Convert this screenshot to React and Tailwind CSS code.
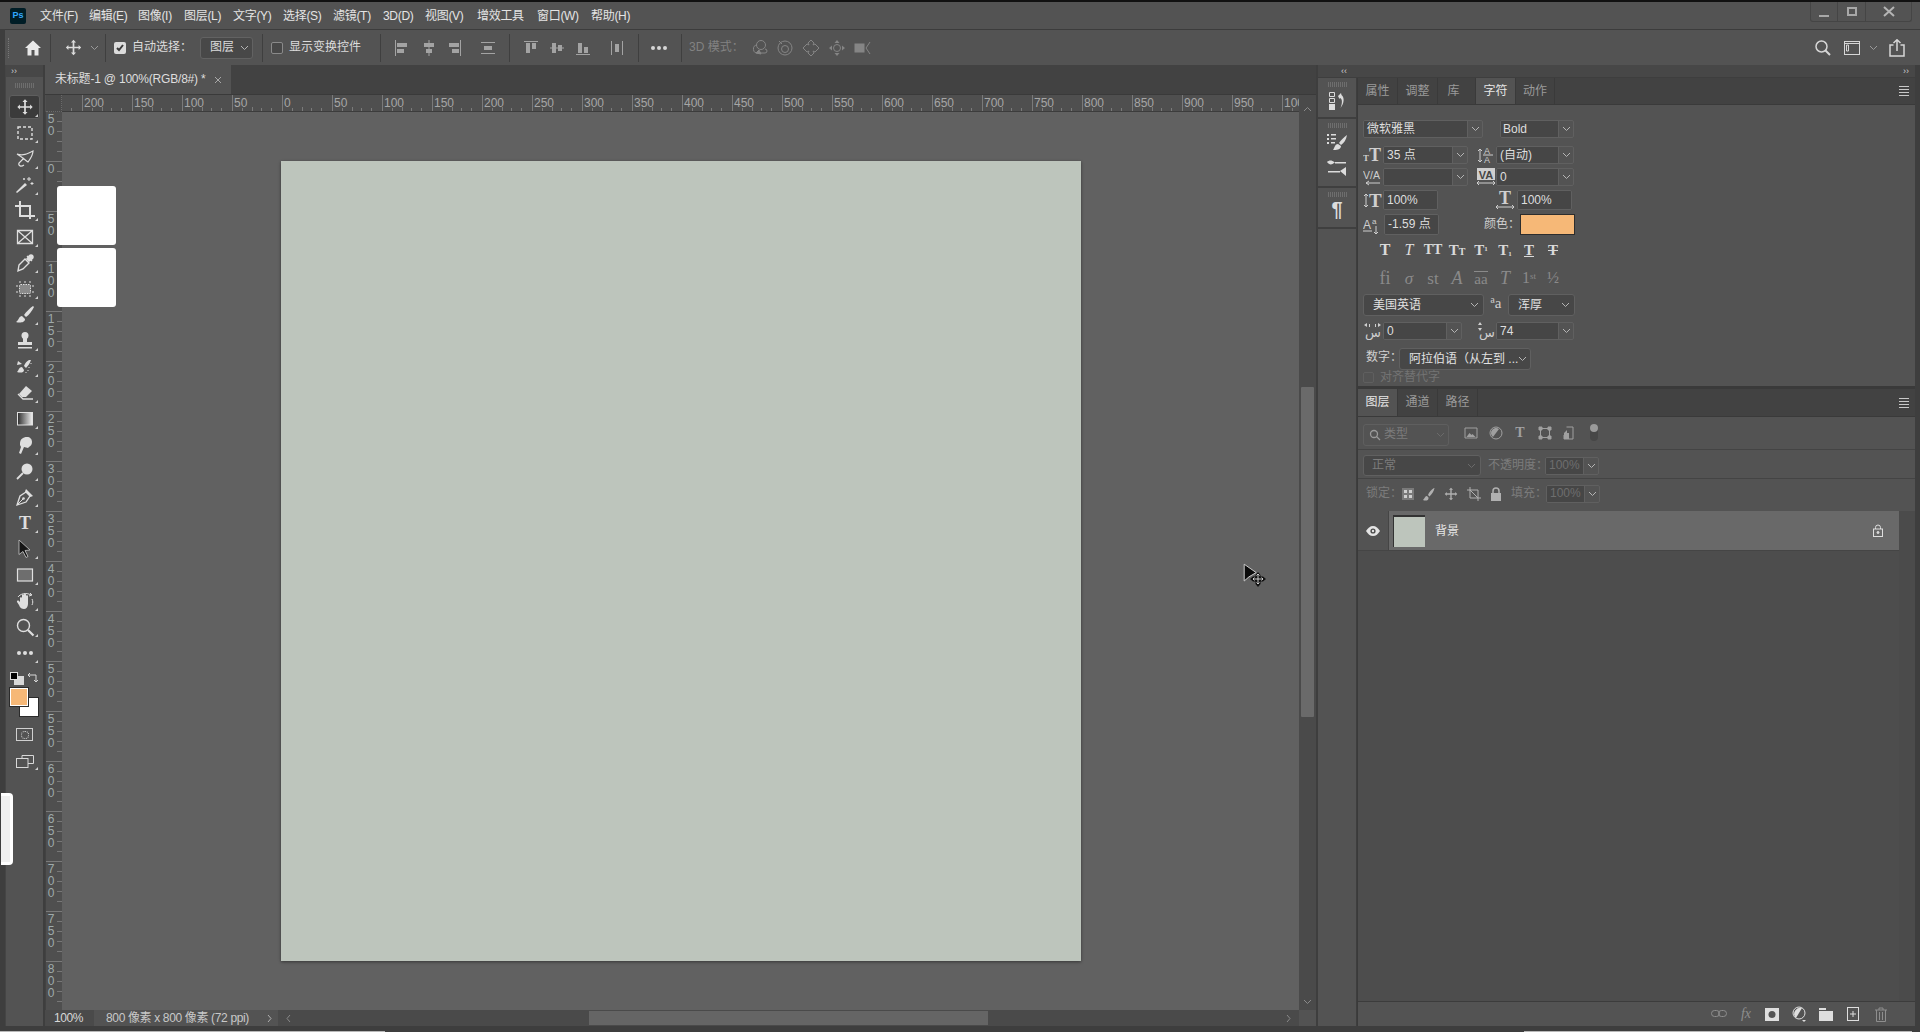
import React from "react";

const Svg = ({ s = 20, w, h, vb = "0 0 20 20", c = "", children }) => (
  <svg width={w || s} height={h || s} viewBox={vb} className={"shrink-0 " + c} fill="currentColor">{children}</svg>
);
const Chev = ({ c = "text-[#b5b5b5]" }) => (
  <svg width="9" height="6" viewBox="0 0 9 6" className={"shrink-0 " + c} fill="none" stroke="currentColor" strokeWidth="1"><path d="M1 1l3.500 3.500L8 1" /></svg>
);
const MOVE = "M10 1l3 3h-2v5h5V7l3 3-3 3v-2h-5v5h2l-3 3-3-3h2v-5H4v2l-3-3 3-3v2h5V4H7z";
const Grip = () => (
  <div className="flex justify-center gap-[1px] h-[5px]">
    {[0, 1, 2, 3, 4, 5, 6, 7, 8, 9].map((i) => <span key={i} className="w-[1px] h-[5px] bg-[#6e6e6e]" />)}
  </div>
);
const Sep = () => <div className="w-[1px] h-[28px] bg-[#3f3f3f] shrink-0" />;
const Menu = () => (
  <div className="flex flex-col gap-[2px] w-[10px]">
    {[0, 1, 2, 3].map((i) => <span key={i} className="h-[1px] bg-[#c8c8c8]" />)}
  </div>
);

const menus = [
  ["文件(F)", "w-[49px]"], ["编辑(E)", "w-[49px]"], ["图像(I)", "w-[46px]"], ["图层(L)", "w-[49px]"],
  ["文字(Y)", "w-[50px]"], ["选择(S)", "w-[50px]"], ["滤镜(T)", "w-[50px]"], ["3D(D)", "w-[42px]"],
  ["视图(V)", "w-[52px]"], ["增效工具", "w-[60px]"], ["窗口(W)", "w-[54px]"], ["帮助(H)", "w-[50px]"],
];

function TitleBar() {
  return (
    <div className="h-[27px] bg-[#535353] flex items-center relative shrink-0">
      <div className="ml-[10px] w-[16px] h-[16px] rounded-[2px] bg-[#001d26] flex items-center justify-center text-[9px] font-bold text-[#31a8ff] leading-none">Ps</div>
      <div className="flex ml-[14px] text-[12px] text-[#e4e4e4] mt-[1px] tracking-[-0.3px]">
        {menus.map(([t, w]) => <div key={t} className={w + " whitespace-nowrap"}>{t}</div>)}
      </div>
      <div className="absolute right-[8px] top-0 w-[102px] h-[20px] border border-t-0 border-[#454545] rounded-b-[3px] flex text-[#b4b4b4]">
        <div className="w-[27px] border-r border-[#454545] flex items-end justify-center pb-[4px]"><span className="w-[10px] h-[2px] bg-[#a8a8a8]" /></div>
        <div className="w-[28px] border-r border-[#454545] flex items-center justify-center"><span className="w-[10px] h-[9px] border-2 border-[#a8a8a8]" /></div>
        <div className="flex-1 flex items-center justify-center">
          <svg width="12" height="11" viewBox="0 0 12 11" stroke="currentColor" strokeWidth="2"><path d="M1 1l10 9M11 1L1 10" /></svg>
        </div>
      </div>
    </div>
  );
}

const Align = ({ children, ml = "" }) => (
  <Svg s={18} vb="0 0 18 18" c={ml + " text-[#a3a3a3]"}>{children}</Svg>
);

function OptionsBar() {
  return (
    <div className="h-[36px] ml-[5px] bg-[#535353] border-t border-[#3c3c3c] flex items-center text-[12px] text-[#dcdcdc] shrink-0 relative">
      <div className="w-[5px] h-[20px] ml-[3px] border-l border-dotted border-[#777]" />
      <Svg s={18} vb="0 0 18 18" c="ml-[11px] text-[#e8e8e8]"><path d="M9 1.500L1 9h2.500v7.500h4V11h3v5.500h4V9H17z" /></Svg>
      <div className="ml-[8px]"><Sep /></div>
      <Svg s={17} c="ml-[14px] text-[#dcdcdc]"><path d={MOVE} /></Svg>
      <Chev c="ml-[8px] text-[#9a9a9a]" />
      <div className="ml-[6px]"><Sep /></div>
      <div className="ml-[8px] w-[12px] h-[12px] rounded-[2px] bg-[#dcdcdc] flex items-center justify-center">
        <svg width="10" height="10" viewBox="0 0 10 10" fill="none" stroke="#3a3a3a" strokeWidth="2"><path d="M2 5l2 2 4-5" /></svg>
      </div>
      <span className="ml-[6px] whitespace-nowrap w-[68px]">自动选择：</span>
      <div className="w-[53px] h-[22px] border border-[#626262] bg-[#484848] rounded-[3px] flex items-center pl-[9px] justify-between pr-[3px]">
        <span>图层</span><Chev />
      </div>
      <div className="ml-[9px]"><Sep /></div>
      <div className="ml-[8px] w-[12px] h-[12px] rounded-[2px] border border-[#8a8a8a] bg-[#484848]" />
      <span className="ml-[6px] whitespace-nowrap w-[91px]">显示变换控件</span>
      <Sep />
      <Align ml="ml-[13px]"><path d="M1 1h1v16H1zM3 4h10v4H3zM3 10h7v4H3z" /></Align>
      <Align ml="ml-[8px]"><path d="M8.500 1h1v16h-1zM4 4h10v4H4zM6 10h6v4H6z" /></Align>
      <Align ml="ml-[6px]"><path d="M16 1h1v16h-1zM5 4h10v4H5zM8 10h7v4H8z" /></Align>
      <Align ml="ml-[17px]"><path d="M2 3h14v1H2zM2 14h14v1H2zM5 7h8v4H5z" /></Align>
      <div className="ml-[12px]"><Sep /></div>
      <Align ml="ml-[12px]"><path d="M2 2h14v1H2zM4 4h4v10H4zM10 4h4v6h-4z" /></Align>
      <Align ml="ml-[8px]"><path d="M2 8.500h14v1H2zM4 4h4v10H4zM10 6h4v6h-4z" /></Align>
      <Align ml="ml-[8px]"><path d="M2 15h14v1H2zM4 4h4v10H4zM10 8h4v6h-4z" /></Align>
      <Align ml="ml-[16px]"><path d="M3 2h1v14H3zM14 2h1v14h-1zM7 5h4v8H7z" /></Align>
      <div className="ml-[12px]"><Sep /></div>
      <div className="ml-[12px] flex gap-[2px]">{[0, 1, 2].map((i) => <span key={i} className="w-[4px] h-[4px] rounded-full bg-[#d6d6d6]" />)}</div>
      <div className="ml-[14px]"><Sep /></div>
      <span className="ml-[7px] text-[#828282] whitespace-nowrap w-[61px]">3D 模式：</span>
      <div className="flex text-[#858585] gap-[8px] items-center">
        <svg width="18" height="18" viewBox="0 0 18 18" fill="none" stroke="currentColor"><circle cx="11" cy="6" r="4.500" /><path d="M7 6a4 4 0 1 0 1 8h7a2 2 0 0 0 0-4" /><path d="M6 14l3-3 2 4z" fill="currentColor" /></svg>
        <svg width="18" height="18" viewBox="0 0 18 18" fill="none" stroke="currentColor"><circle cx="9" cy="9" r="7" /><circle cx="9" cy="10" r="3.500" /><path d="M3 2l3 3" /></svg>
        <svg width="18" height="18" viewBox="0 0 18 18" fill="none" stroke="currentColor"><path d="M9 1l3 3-1 2 2-1 4 4-4 4-2-1 1 2-3 3-3-3 1-2-2 1-4-4 4-4 2 1-1-2z" /></svg>
        <svg width="18" height="18" viewBox="0 0 18 18"><path d="M9 1l2.500 3h-5zM9 17l-2.500-3h5zM1 9l3-2.500v5zM17 9l-3 2.500v-5z" fill="currentColor" /><circle cx="9" cy="9" r="3.500" fill="none" stroke="currentColor" /></svg>
        <svg width="18" height="18" viewBox="0 0 18 18" fill="none" stroke="currentColor"><rect x="1" y="5" width="9" height="8" fill="currentColor" /><path d="M16 3l-4 6 4 6" /></svg>
      </div>
      <div className="ml-auto mr-[15px] flex items-center text-[#d6d6d6]">
        <svg width="18" height="18" viewBox="0 0 18 18" fill="none" stroke="currentColor" strokeWidth="1.500"><circle cx="7.500" cy="7.500" r="5.500" /><path d="M11.500 11.500L16 16" strokeWidth="2" /></svg>
        <svg width="16" height="14" viewBox="0 0 16 14" className="ml-[12px]" fill="none" stroke="currentColor"><rect x="0.500" y="0.500" width="15" height="13" /><path d="M0 2.500h16" /><path d="M2.500 4h2v6h-2z" /></svg>
        <Chev c="ml-[9px] text-[#9a9a9a]" />
        <svg width="16" height="18" viewBox="0 0 16 18" className="ml-[11px]" fill="none" stroke="currentColor" strokeWidth="1.500"><path d="M4.500 6H1v11h14V6h-3.500M8 12V1M4.500 4L8 .8 11.500 4" /></svg>
      </div>
    </div>
  );
}

const tools = [
  <path d={MOVE} transform="translate(1.500 1.500) scale(.85)" />,
  <rect x="3" y="4" width="14" height="12" fill="none" stroke="currentColor" strokeWidth="1.400" strokeDasharray="3 2" />,
  <path d="M2 5C8 7 12 5 18 2C18 6 16 9 13 13C10 11 7 8 2 5ZM9 9L4 14C3 17 6 18 9 16" fill="none" stroke="currentColor" strokeWidth="1.200" />,
  <g><path d="M2 18l-1-1 9-9 2 2z" /><path d="M14 2v4M12 4h4M17 7v3M15.500 8.500h3M9 3v2M8 4h2" fill="none" stroke="currentColor" /></g>,
  <path d="M5 0v15h15M0 5h15v13" fill="none" stroke="currentColor" strokeWidth="2" />,
  <path d="M2.500 3.500h15v13h-15zM2.500 3.500l15 13M17.500 3.500l-15 13" fill="none" stroke="currentColor" strokeWidth="1.300" />,
  <g><path d="M12 3l5 5M4 12l6-6 4 4-6 6-5 2z" fill="none" stroke="currentColor" strokeWidth="1.400" /><path d="M11 6l3-4c1-1 3-1 4 0s1 3 0 4l-4 3z" /></g>,
  <g><rect x="4.500" y="5.500" width="11" height="9" rx="1" fill="#8a8a8a" stroke="currentColor" strokeDasharray="1.500 1" /><path d="M5 2v2M10 2v2M15 2v2M5 16v2M10 16v2M15 16v2M1 7h2M1 13h2M17 7h2M17 13h2" stroke="currentColor" fill="none" /></g>,
  <path d="M18 1c-3 2-7 6-9 9l2 2c3-2 6-6 8-10zM7 11c-3 0-3 4-6 6 3 1 9 1 9-3z" />,
  <g><circle cx="10" cy="4.500" r="3.500" /><path d="M8 7h4v4h5v3H3v-3h5zM3 16h14v1.500H3z" /></g>,
  <g><path d="M14 3c-2 1-4 3-5 6l2 2c2-2 4-5 5-8zM7 10c-3 0-3 3-5 5 3 1 7 1 7-2z" /><path d="M3 4l4 3-5 1z" /><path d="M14 10v1M13 13v1M11 15v1M16 6v1" stroke="currentColor" fill="none" /></g>,
  <g><path d="M11 3l6 5-6 6H7l-3-3z" /><path d="M3 11l5 5h10" fill="none" stroke="currentColor" strokeWidth="1.300" /></g>,
  <g><defs><linearGradient id="gr"><stop offset="0" stopColor="#2c2c2c" /><stop offset="1" stopColor="#f0f0f0" /></linearGradient></defs><rect x="2.500" y="3.500" width="15" height="12.500" fill="url(#gr)" stroke="#e0e0e0" /></g>,
  <path d="M5 9c0-5 3-7 7-7 3 0 5 2 5 5 0 2-1 4-3 5l-1 1-4-1-3 7-2-1 2-6-1-2z" />,
  <g><circle cx="12" cy="8" r="5.500" /><path d="M8 12l-6 6" stroke="currentColor" strokeWidth="1.800" fill="none" /></g>,
  <g><path d="M2 18L5 9L11 5L15 9L11 15Z" fill="none" stroke="currentColor" strokeWidth="1.300" /><path d="M11 2L18 9L15.500 10L10 4.500Z" /><path d="M2 18L8 12" stroke="currentColor" fill="none" /><circle cx="8.500" cy="11.500" r="1.300" /></g>,
  <text x="10" y="16" textAnchor="middle" fontSize="18" fontFamily="Liberation Serif" fontWeight="700">T</text>,
  <path d="M4 1l11 10-5 .5 3 6-2 1-3-6-4 3z" fill="#161616" stroke="#c8c8c8" strokeWidth="0.800" />,
  <rect x="2.500" y="4" width="15" height="12" fill="#6e6e6e" stroke="#e0e0e0" strokeWidth="1.200" />,
  <g><path d="M5 11V7c0-1 2-1 2 0V4c0-1 2-1 2 0v-.5c0-1 2-1 2 0V5c0-1 2-1 2 0v8c0 3-2 5-4 5s-4-1-5-4l-2-3c-.5-1 1-2 2-1z" /><path d="M3 6c2-3 8-5 13-2M15 2l2 2-3 1M17 8c1 2 1 4 0 6" fill="none" stroke="currentColor" /></g>,
  <g fill="none" stroke="currentColor"><circle cx="8.500" cy="8.500" r="6" strokeWidth="1.400" /><path d="M13 13l5.500 5.500" strokeWidth="2.200" /></g>,
  <g><circle cx="4" cy="10" r="2" /><circle cx="10" cy="10" r="2" /><circle cx="16" cy="10" r="2" /></g>,
];

function Tool({ i }) {
  const active = i === 0;
  return (
    <div className="relative h-[26px] flex items-center justify-center shrink-0">
      {active && <div className="absolute left-[3px] right-[3px] top-[1px] bottom-[1px] bg-[#3b3b3b] border border-[#5e5e5e] rounded-[3px]" />}
      <Svg s={20} c="relative text-[#dedede]">{tools[i]}</Svg>
      <span className="absolute right-[5px] bottom-[3px] w-0 h-0 border-l-[3px] border-b-[3px] border-l-transparent border-b-[#cfcfcf]" />
    </div>
  );
}

function ToolPanel() {
  return (
    <div className="w-[38px] flex flex-col bg-[#535353] shrink-0 border-l border-[#454545]">
      <div className="h-[12px] bg-[#474747] flex items-center pl-[5px] text-[9px] text-[#d0d0d0] leading-none">››</div>
      <div className="h-[17px] flex items-center"><div className="w-full"><Grip /></div></div>
      <div className="flex flex-col">
        {tools.map((_, i) => <Tool key={i} i={i} />)}
      </div>
      <div className="relative h-[108px] shrink-0">
        <div className="absolute left-[4px] top-[6px] w-[8px] h-[8px] bg-black border border-[#ddd] z-10" />
        <div className="absolute left-[8px] top-[10px] w-[10px] h-[9px] bg-[#d8d8d8]" />
        <svg width="12" height="12" viewBox="0 0 12 12" className="absolute left-[21px] top-[6px] text-[#d8d8d8]" fill="none" stroke="currentColor"><path d="M1 3h8v7M3 1L1 3l2 2M7 8l2 2 2-2" /></svg>
        <div className="absolute left-[13px] top-[31px] w-[20px] h-[20px] bg-white border border-[#2b2b2b]" />
        <div className="absolute left-[4px] top-[22px] w-[18px] h-[18px] bg-[#f6b877] border border-white outline outline-1 outline-[#2b2b2b]" />
        <div className="absolute left-[10px] top-[62px] w-[17px] h-[13px] border border-[#d0d0d0] flex items-center justify-center"><span className="w-[8px] h-[8px] rounded-full border border-dotted border-[#e0e0e0]" /></div>
        <svg width="18" height="13" viewBox="0 0 18 13" className="absolute left-[10px] top-[89px] text-[#d8d8d8]" fill="none" stroke="currentColor"><path d="M6 3V.5h11.500v8H12" /><rect x=".5" y="3.500" width="11.500" height="9" /></svg>
        <span className="absolute right-[5px] bottom-[4px] w-0 h-0 border-l-[3px] border-b-[3px] border-l-transparent border-b-[#cfcfcf]" />
      </div>
      <div className="flex-1" />
    </div>
  );
}

const hLabels = ["", "200", "150", "100", "50", "0", "50", "100", "150", "200", "250", "300", "350", "400", "450", "500", "550", "600", "650", "700", "750", "800", "850", "900", "950", "1000"];
const vLabels = ["50", "0", "50", "100", "150", "200", "250", "300", "350", "400", "450", "500", "550", "600", "650", "700", "750", "800"];

function HRuler() {
  return (
    <div className="h-[17px] bg-[#4f4f4f] flex shrink-0">
      <div className="w-[16px] ml-[1px] h-full bg-[#4a4a4a] border-r border-b border-dotted border-[#6a6a6a] shrink-0" />
      <div className="flex-1 overflow-hidden border-b border-[#3c3c3c]">
        <div className="flex -ml-[30px] w-[1400px]">
          {hLabels.map((t, i) => (
            <div key={i} className="w-[50px] h-[16px] shrink-0 border-l border-[#7a7a7a] relative text-[12px] leading-[16px] text-[#a6a6a6] pl-[1px] overflow-hidden">
              <span className="whitespace-nowrap">{t}</span>
              <div className="absolute left-0 right-0 bottom-0 flex">
                {[0, 1, 2, 3, 4].map((k) => (
                  <div key={k} className="w-[10px] h-[4px] flex justify-end">
                    <span className={(k < 4 ? "bg-[#7a7a7a] " : "") + (k === 1 ? "h-[4px]" : "h-[3px] mt-[1px]") + " w-[1px]"} />
                  </div>
                ))}
              </div>
            </div>
          ))}
        </div>
      </div>
    </div>
  );
}

function VRuler() {
  return (
    <div className="w-[16px] ml-[1px] bg-[#4f4f4f] overflow-hidden shrink-0 text-[12px] text-[#9eaaaa] leading-[12px]">
      <div className="-mt-[1px]">
        {vLabels.map((t, i) => (
          <div key={i} className="h-[50px] border-t border-[#7a7a7a] flex">
            <div className="w-[10px] flex flex-col items-center pt-[1px]">
              {t.split("").map((d, k) => <span key={k} className="h-[12px]">{d}</span>)}
            </div>
            <div className="flex-1 flex flex-col items-end">
              {[0, 1, 2, 3].map((k) => <span key={k} className="w-[5px] h-[1px] bg-[#777] mt-[9px]" />)}
            </div>
          </div>
        ))}
      </div>
    </div>
  );
}

function Center() {
  return (
    <div className="w-[1271px] ml-[2px] flex flex-col shrink-0 bg-[#424242]">
      <div className="h-[30px] flex bg-[#424242] shrink-0 border-b border-[#3a3a3a]">
        <div className="w-[186px] bg-[#535353] flex items-center pl-[10px] text-[12px] text-[#dedede] whitespace-nowrap tracking-[-0.2px]">
          <span className="w-[159px]">未标题-1 @ 100%(RGB/8#) *</span>
          <svg width="8" height="8" viewBox="0 0 8 8" stroke="#a8a8a8" fill="none"><path d="M1 1l6 6M7 1L1 7" /></svg>
        </div>
      </div>
      <div className="flex flex-1 min-h-0">
        <div className="flex flex-col flex-1 min-w-0">
          <HRuler />
          <div className="flex flex-1 min-h-0">
            <VRuler />
            <div className="flex-1 bg-[#616161] overflow-hidden">
              <div className="ml-[219px] mt-[49px] w-[800px] h-[800px] bg-[#bdc5bc] shadow-[0_1px_3px_rgba(0,0,0,0.45)]" />
            </div>
          </div>
        </div>
        <div className="w-[17px] bg-[#4a4a4a] flex flex-col shrink-0">
          <div className="h-[17px] flex items-center justify-center mt-[5px]"><svg width="9" height="6" viewBox="0 0 9 6" fill="none" stroke="#8a8a8a"><path d="M1 5l3.500-3.500L8 5" /></svg></div>
          <div className="mt-[270px] mx-[2px] h-[330px] bg-[#6a6a6a] rounded-[1px]" />
          <div className="mt-auto h-[17px] flex items-center justify-center"><Chev c="text-[#8a8a8a]" /></div>
        </div>
      </div>
      <div className="h-[16px] flex shrink-0 text-[12px] leading-[16px] text-[#d8d8d8]">
        <div className="w-[49px] bg-[#4a4a4a] pl-[9px] tracking-[-0.4px]">100%</div>
        <div className="w-[184px] bg-[#535353] flex items-center justify-between pl-[12px] pr-[6px] text-[#c8c8c8] whitespace-nowrap tracking-[-0.35px]">
          <span>800 像素 x 800 像素 (72 ppi)</span>
          <svg width="5" height="9" viewBox="0 0 5 9" fill="none" stroke="#b0b0b0"><path d="M1 1l3 3.500L1 8" /></svg>
        </div>
        <div className="flex-1 bg-[#4a4a4a] flex items-center relative">
          <svg width="5" height="9" viewBox="0 0 5 9" fill="none" stroke="#8a8a8a" className="ml-[8px]"><path d="M4 1L1 4.500 4 8" /></svg>
          <div className="ml-[298px] w-[399px] h-[14px] bg-[#656565]" />
          <svg width="5" height="9" viewBox="0 0 5 9" fill="none" stroke="#8a8a8a" className="ml-auto mr-[8px]"><path d="M1 1l3 3.500L1 8" /></svg>
        </div>
        <div className="w-[17px] bg-[#535353]" />
      </div>
    </div>
  );
}

function Dock() {
  const Sec = ({ h, children }) => (
    <div className={h + " border-b-2 border-[#3f3f3f] flex flex-col items-center pt-[4px] shrink-0"}>
      <div className="w-full mb-[2px]"><Grip /></div>
      {children}
    </div>
  );
  return (
    <div className="w-[38px] bg-[#535353] shrink-0 flex flex-col text-[#dcdcdc]">
      <Sec h="h-[41px]">
        <svg width="20" height="22" viewBox="0 0 20 22" className="mt-[2px]"><path d="M2.500 1.500h5v4h-5zM2.500 7.500h5v4h-5z" fill="none" stroke="currentColor" /><path d="M2 13h6v6H2z" fill="currentColor" /><path d="M11 5l3-3 .5 2c3 2 3 8-1 13 2-5 2-9-.5-10l-.5 1z" fill="currentColor" /></svg>
      </Sec>
      <Sec h="h-[69px]">
        <svg width="22" height="20" viewBox="0 0 22 20" className="mt-[2px]"><path d="M1 2h2v2H1zM1 6h2v2H1zM1 10h2v2H1zM5 2h5v1.500H5zM5 6h5v1.500H5zM5 10h4v1.500H5z" fill="currentColor" /><path d="M21 3c-3 2-6 5-8 8l2 2c3-2 5-5 6-10zM12 12c-3 0-3 3-5 6 3 0 8 0 8-4z" fill="currentColor" /></svg>
        <svg width="22" height="16" viewBox="0 0 22 16" className="mt-[8px]"><path d="M1 2c2-2 5-2 7 0 1 0 1 1 0 1-2 2-5 2-7-1zM9 2h11v1.500H9zM2 11h12v1.500H2zM14 11l6-4v9z" fill="currentColor" /></svg>
      </Sec>
      <Sec h="h-[41px]">
        <div className="-mt-[1px] text-[20px] leading-[22px] font-bold font-['Liberation_Sans']">¶</div>
      </Sec>
    </div>
  );
}

const Field = ({ w, h = "h-[18px]", t, chev, ml = "", tc = "text-[#dedede]", pl = "pl-[3px]" }) => (
  <div className={w + " " + h + " " + ml + " border border-[#606060] rounded-[2px] flex items-stretch shrink-0 overflow-hidden"}>
    <div className={"flex-1 min-w-0 bg-[#464646] flex items-center whitespace-nowrap text-[12px] " + pl + " " + tc}>{t}</div>
    {chev && <div className="w-[15px] border-l border-[#606060] flex items-center justify-center"><Chev /></div>}
  </div>
);
const Sel = ({ w, h = "h-[22px]", t, ml = "", tc = "text-[#e2e2e2]", pl = "pl-[9px]", cc }) => (
  <div className={w + " " + h + " " + ml + " " + pl + " border border-[#606060] bg-[#474747] rounded-[3px] flex items-center justify-between pr-[4px] shrink-0 whitespace-nowrap text-[12px] overflow-hidden " + tc}>
    <span>{t}</span><Chev c={cc || "text-[#b5b5b5]"} />
  </div>
);

const IW = ({ c = "", w = 20, h = 18, children }) => (
  <svg width={w} height={h} viewBox={`0 0 ${w} ${h}`} className={"shrink-0 text-[#cfcfcf] " + c} fill="currentColor">{children}</svg>
);
const SF = "Liberation Serif";
const LF = "Liberation Sans";
const Arrow = ({ d }) => <path d={d} fill="none" stroke="currentColor" strokeWidth="1" />;

const Tab = ({ t, w, on, c = "" }) => (
  <div className={w + " border-r border-[#3a3a3a] flex items-center justify-center text-[12px] shrink-0 " + c + " " + (on ? "bg-[#535353] text-[#e6e6e6]" : "text-[#9a9a9a]")}>{t}</div>
);

const serif = "font-['Liberation_Serif']";
const styleGlyphs = [
  <b className={serif + " text-[16px]"}>T</b>,
  <i className={serif + " text-[16px]"}>T</i>,
  <b className={serif + " text-[14px]"}>TT</b>,
  <b className={serif + " text-[15px]"}>T<span className="text-[10px]">T</span></b>,
  <b className={serif + " text-[15px]"}>T<sup className="text-[7px]">1</sup></b>,
  <b className={serif + " text-[15px]"}>T<sub className="text-[7px]">1</sub></b>,
  <b className={serif + " text-[15px] underline"}>T</b>,
  <b className={serif + " text-[15px] line-through"}>T</b>,
];
const otGlyphs = [
  <span className={serif + " text-[18px]"}>fi</span>,
  <i className={serif + " text-[17px]"}>σ</i>,
  <span className={serif + " text-[17px]"}>st</span>,
  <i className={serif + " text-[18px]"}>A</i>,
  <span className={serif + " text-[15px] border-t border-[#8a8a8a] leading-[14px]"}>aa</span>,
  <i className={serif + " text-[18px]"}>T</i>,
  <span className={serif + " text-[16px]"}>1<sup className="text-[9px]">st</sup></span>,
  <span className={serif + " text-[16px]"}>½</span>,
];

function CharPanel() {
  return (
    <div className="h-[308px] flex flex-col shrink-0">
      <div className="h-[27px] flex bg-[#424242] shrink-0 border-b border-[#3a3a3a] items-stretch">
        <Tab t="属性" w="w-[40px]" /><Tab t="调整" w="w-[40px]" /><Tab t="库" w="w-[38px]" c="pr-[6px]" /><Tab t="字符" w="w-[40px]" on /><Tab t="动作" w="w-[39px]" />
        <div className="ml-auto mr-[6px] self-center"><Menu /></div>
      </div>
      <div className="pl-[5px] flex flex-col text-[12px] text-[#d0d0d0] flex-1 min-h-0 overflow-hidden">
        <div className="flex mt-[15px]">
          <Field w="w-[120px]" t="微软雅黑" chev />
          <Field w="w-[74px]" ml="ml-[17px]" t="Bold" chev pl="pl-[2px]" />
        </div>
        <div className="flex mt-[8px] items-center">
          <IW><text x="0" y="15" fontFamily={SF} fontWeight="700" fontSize="9">T</text><text x="6" y="15" fontFamily={SF} fontWeight="700" fontSize="18">T</text></IW>
          <Field w="w-[85px]" t="35 点" chev />
          <IW c="ml-[8px]"><text x="8" y="8" fontFamily={LF} fontSize="9">A</text><text x="8" y="17" fontFamily={LF} fontSize="9">A</text><Arrow d="M4 3v13M2 5l2-2 2 2M2 14l2 2 2-2M7 9h10" /></IW>
          <Field w="w-[78px]" t="(自动)" chev />
        </div>
        <div className="flex mt-[4px] items-center">
          <IW><text x="0" y="11" fontFamily={LF} fontSize="10.500">V/A</text><Arrow d="M3 15h14M6 13l-3 2 3 2" /></IW>
          <Field w="w-[85px]" t="" chev />
          <IW c="ml-[8px]"><rect x="1" y="0" width="18" height="12" /><text x="10" y="10.500" textAnchor="middle" fontFamily={LF} fontWeight="700" fontSize="11" fill="#454545">VA</text><Arrow d="M1 15h18M3 13l-2 2 2 2M17 13l2 2-2 2" /></IW>
          <Field w="w-[78px]" t="0" chev />
        </div>
        <div className="flex mt-[4px] items-center">
          <IW><Arrow d="M3 3v13M1 5l2-2 2 2M1 14l2 2 2-2" /><text x="6" y="16" fontFamily={SF} fontWeight="700" fontSize="19">T</text></IW>
          <Field w="w-[55px]" h="h-[20px]" t="100%" />
          <IW c="ml-[57px] mr-[2px]"><text x="10" y="13" textAnchor="middle" fontFamily={SF} fontWeight="700" fontSize="18">T</text><Arrow d="M1 16h18M3 14l-2 2 2 2M17 14l2 2-2 2" /></IW>
          <Field w="w-[55px]" h="h-[20px]" t="100%" />
        </div>
        <div className="flex mt-[4px] items-center">
          <IW w={21}><text x="0" y="13" fontFamily={LF} fontSize="12">A</text><text x="9" y="8" fontFamily={LF} fontSize="8">a</text><Arrow d="M0 15h9M13 10v8M11 16l2 2 2-2" /></IW>
          <Field w="w-[55px]" h="h-[21px]" t="-1.59 点" />
          <span className="ml-[45px] w-[36px] whitespace-nowrap">颜色：</span>
          <div className="w-[55px] h-[21px] bg-[#f6b877] border border-[#2d2d2d]" />
        </div>
        <div className="flex mt-[6px] ml-[10px] h-[18px] text-[#dadada]">
          {styleGlyphs.map((g, i) => <div key={i} className="w-[24px] flex items-center justify-center leading-none">{g}</div>)}
        </div>
        <div className="flex mt-[10px] ml-[10px] h-[18px] text-[#8a8a8a]">
          {otGlyphs.map((g, i) => <div key={i} className="w-[24px] flex items-center justify-center leading-none">{g}</div>)}
        </div>
        <div className="flex mt-[7px] items-start">
          <Sel w="w-[121px]" t="美国英语" />
          <span className="w-[24px] text-center font-['Liberation_Serif'] text-[15px] leading-[18px]">ªa</span>
          <Sel w="w-[67px]" t="浑厚" />
        </div>
        <div className="flex mt-[6px] items-center">
          <IW><text x="10" y="15" textAnchor="middle" fontFamily="DejaVu Sans" fontSize="13">س</text><path d="M1 3l3-2v4zM6 2h1v3H6zM12 2h1v3h-1zM18 3l-3-2v4z" /></IW>
          <Field w="w-[79px]" t="0" chev />
          <IW c="ml-[14px]"><text x="11" y="15" textAnchor="middle" fontFamily="DejaVu Sans" fontSize="13">س</text><path d="M2 3l2-3 2 3zM2 6h4l-2 3z" /></IW>
          <Field w="w-[78px]" t="74" chev />
        </div>
        <div className="flex mt-[8px] items-center">
          <span className="ml-[3px] w-[33px] -mt-[4px] whitespace-nowrap">数字：</span>
          <Sel w="w-[132px]" t="阿拉伯语（从左到 ..." />
        </div>
        <div className="flex items-center mt-[1px] h-[12px] text-[#737373]">
          <div className="w-[11px] h-[11px] rounded-[2px] border border-[#5f5f5f]" />
          <span className="ml-[6px]">对齐替代字</span>
        </div>
      </div>
    </div>
  );
}

function LayersPanel() {
  const dim = "text-[#7c7c7c]";
  return (
    <div className="flex-1 flex flex-col min-h-0 text-[12px]">
      <div className="h-[28px] flex bg-[#424242] shrink-0 border-b border-[#3a3a3a] items-stretch">
        <Tab t="图层" w="w-[40px]" on /><Tab t="通道" w="w-[40px]" /><Tab t="路径" w="w-[40px]" />
        <div className="ml-auto mr-[6px] self-center"><Menu /></div>
      </div>
      <div className="h-[33px] flex items-center pl-[5px] pt-[3px] border-b border-[#444] shrink-0 text-[#8c8c8c]">
        <div className="w-[86px] h-[22px] border border-[#5f5f5f] rounded-[3px] flex items-center pl-[5px] pr-[3px] justify-between">
          <svg width="12" height="12" viewBox="0 0 12 12" fill="none" stroke="#9a9a9a" strokeWidth="1.300"><circle cx="5" cy="5" r="3.500" /><path d="M7.500 7.500L11 11" /></svg>
          <span className={"mr-auto ml-[3px] " + dim}>类型</span><Chev c="text-[#6a6a6a]" />
        </div>
        <div className="flex ml-[15px] gap-[10.5px] items-center text-[#a0a0a0] -mt-[4px]">
          <svg width="14" height="14" viewBox="0 0 14 14"><path d="M1 2h12v10H1z" fill="none" stroke="currentColor" /><path d="M2.500 11l3-4 2 2 1-1 3 3z" fill="currentColor" /></svg>
          <svg width="14" height="14" viewBox="0 0 14 14"><circle cx="7" cy="7" r="6" fill="none" stroke="currentColor" /><path d="M10 3L4 11a5 5 0 0 1 6-8z" fill="currentColor" /></svg>
          <span className="w-[14px] text-center font-['Liberation_Serif'] font-bold text-[14px] leading-none">T</span>
          <svg width="14" height="14" viewBox="0 0 14 14" fill="none" stroke="currentColor"><rect x="2.500" y="2.500" width="9" height="9" /><path d="M1 1h3v3H1zM10 1h3v3h-3zM1 10h3v3H1zM10 10h3v3h-3z" fill="currentColor" /></svg>
          <svg width="14" height="14" viewBox="0 0 14 14"><path d="M4.500 1H11v12H2V9" fill="none" stroke="currentColor" /><path d="M2 7l3-3v4zM2 7h5v6H2z" fill="currentColor" /></svg>
        </div>
        <div className="ml-[14px] w-[8px] h-[17px] bg-[#474747] rounded-full -mt-[5px]"><div className="w-[8px] h-[8px] rounded-full bg-[#9a9a9a]" /></div>
      </div>
      <div className="h-[29px] flex items-center pl-[5px] pt-[3px] border-b border-[#444] shrink-0">
        <Sel w="w-[118px]" h="h-[21px]" t="正常" tc={dim} cc="text-[#6a6a6a]" pl="pl-[8px]" />
        <span className={"ml-[7px] w-[57px] whitespace-nowrap " + dim}>不透明度：</span>
        <Field w="w-[54px]" t="100%" tc="text-[#6e6e6e]" chev />
      </div>
      <div className="h-[32px] flex items-center pl-[8px] pb-[3px] shrink-0">
        <span className={"w-[36px] whitespace-nowrap " + dim}>锁定：</span>
        <div className="flex gap-[9px] items-center text-[#b0b0b0]">
          <svg width="12" height="12" viewBox="0 0 12 12"><path d="M0 0h12v12H0z" fill="#7a7a7a" /><path d="M2 2h3v3H2zM7 2h3v3H7zM2 7h3v3H2zM7 7h3v3H7z" fill="#cfcfcf" /></svg>
          <svg width="12" height="14" viewBox="0 0 12 14"><path d="M11 1C8 3 6 5 5 8l1.500 1.500C9 7 11 4 11.500 1zM4 9c-2 0-2 2-4 4 2 1 6 1 5.500-2.500z" fill="currentColor" /></svg>
          <svg width="14" height="14" viewBox="0 0 20 20"><path d={MOVE} fill="currentColor" /></svg>
          <svg width="14" height="14" viewBox="0 0 14 14" fill="none" stroke="currentColor"><path d="M3 0v11h11M0 3h11v11" /><path d="M3 3l8 8" /></svg>
          <svg width="12" height="14" viewBox="0 0 12 14"><path d="M3 6V4a3 3 0 0 1 6 0v2" fill="none" stroke="currentColor" strokeWidth="1.500" /><rect x="1" y="6" width="10" height="8" fill="currentColor" /></svg>
        </div>
        <span className={"ml-[9px] w-[35px] whitespace-nowrap " + dim}>填充：</span>
        <Field w="w-[54px]" t="100%" tc="text-[#6e6e6e]" chev />
      </div>
      <div className="flex-1 flex bg-[#4d4d4d] min-h-0">
        <div className="flex-1 flex flex-col">
          <div className="h-[40px] flex shrink-0 border-b border-[#454545]">
            <div className="w-[31px] bg-[#535353] border-r border-[#454545] flex items-center justify-center">
              <svg width="14" height="10" viewBox="0 0 14 10"><path d="M7 0C4 0 2 2 0 5c2 3 4 5 7 5s5-2 7-5c-2-3-4-5-7-5z" fill="#e4e4e4" /><circle cx="7" cy="5" r="2.600" fill="#4a4a4a" /><circle cx="7" cy="5" r="1.200" fill="#e4e4e4" /></svg>
            </div>
            <div className="flex-1 bg-[#696969] flex items-center pl-[4px] pr-[16px]">
              <div className="w-[32px] h-[32px] bg-[#bdc5bc] border-t-2 border-l border-[#333]" />
              <span className="ml-[10px] text-[#e6e6e6] mt-[1px]">背景</span>
              <svg width="10" height="13" viewBox="0 0 10 13" className="ml-auto" fill="none" stroke="#dedede"><path d="M2.500 5V3.500a2.500 2.500 0 0 1 5 0V5" /><rect x=".5" y="5" width="9" height="7.500" /><circle cx="5" cy="8.500" r="1" fill="#dedede" /></svg>
            </div>
          </div>
        </div>
        <div className="w-[16px] bg-[#4b4b4b] shrink-0" />
      </div>
      <div className="h-[25px] border-t border-[#3c3c3c] bg-[#535353] shrink-0 flex items-center justify-end pr-[28px] text-[#dedede] gap-[11px]">
        <svg width="16" height="10" viewBox="0 0 16 10" fill="none" stroke="#8e8e8e"><rect x=".5" y="1.500" width="8" height="6" rx="3" /><rect x="7.500" y="1.500" width="8" height="6" rx="3" /></svg>
        <span className={serif + " italic w-[16px] text-[14px] text-[#8e8e8e] text-center"}>fx</span>
        <svg width="14" height="13" viewBox="0 0 14 13"><rect width="14" height="13" fill="currentColor" /><circle cx="7" cy="6.500" r="3.500" fill="#535353" /></svg>
        <svg width="14" height="16" viewBox="0 0 14 16" className="ml-[2px]"><circle cx="7" cy="7" r="6" fill="none" stroke="currentColor" /><path d="M10 2L4 12a6 6 0 0 1 6-10z" fill="currentColor" /><path d="M10 14l2 2 2-2z" fill="currentColor" /></svg>
        <svg width="14" height="13" viewBox="0 0 14 13" className="ml-[2px]"><path d="M0 0h7v2H0zM0 3h14v10H0z" fill="currentColor" /></svg>
        <svg width="14" height="14" viewBox="0 0 14 14" className="ml-[2px]" fill="none" stroke="currentColor"><rect x="1.500" y=".5" width="11" height="13" /><path d="M7 4v6M4 7h6" /></svg>
        <svg width="12" height="15" viewBox="0 0 12 15" className="ml-[4px]" fill="none" stroke="#8e8e8e"><path d="M0 3h12M4 3V1h4v2M1.500 3v11.500h9V3M4.500 5v8M7.500 5v8" /></svg>
      </div>
    </div>
  );
}

const Cursor = () => (
  <svg width="24" height="26" viewBox="0 0 24 26" className="absolute left-[1243px] top-[563px]">
    <path d="M1 1v14l4-3.500L11 8z" fill="#0a0a0a" stroke="#cfcfcf" strokeWidth=".8" transform="scale(1.200)" />
    <path d="M15 9l2.500 3v1.500H20L23 16l-3 2.500h-2.500V21L15 24l-2.500-3v-2.500H10L7 16l3-2.500h2.500V12z" fill="#111" />
    <path d="M15 11v10M10 16h10M13.500 12.500L15 11l1.500 1.500M13.500 19.500L15 21l1.500-1.500M11.500 14.500L10 16l1.500 1.500M18.500 14.500L20 16l-1.500 1.500" stroke="#d8d8d8" fill="none" strokeWidth=".9" />
  </svg>
);

export default function App() {
  return (
    <div className="w-[1920px] h-[1032px] bg-[#3e3e3e] overflow-hidden relative flex flex-col font-['Liberation_Sans','Noto_Sans_CJK_SC',sans-serif] leading-[1.2]">
      <div className="h-[2px] bg-[#111] shrink-0" />
      <TitleBar />
      <OptionsBar />
      <div className="flex flex-1 min-h-0 pl-[5px] pr-[5px] pb-[6px] bg-[#3e3e3e]">
        <ToolPanel />
        <Center />
        <div className="ml-[2px] flex-1 flex flex-col min-w-0">
          <div className="h-[12px] bg-[#474747] flex items-center justify-between shrink-0 text-[9px] text-[#d0d0d0] leading-none pl-[23px] pr-[6px]">
            <span>‹‹</span><span>››</span>
          </div>
          <div className="flex flex-1 min-h-0 mt-[1px]">
            <Dock />
            <div className="ml-[1px] flex-1 flex flex-col min-w-0 bg-[#535353] border-l border-[#3a3a3a]">
              <CharPanel />
              <div className="h-[3px] bg-[#3a3a3a] shrink-0" />
              <LayersPanel />
            </div>
          </div>
        </div>
      </div>
      <div className="absolute left-0 bottom-0 w-[385px] h-[1px] bg-[#b8b8b8]" />
      <div className="absolute right-[8px] bottom-0 w-[388px] h-[1px] bg-[#b8b8b8]" />
      <div className="absolute left-[57px] top-[186px] w-[59px] h-[59px] bg-white rounded-[3px]" />
      <div className="absolute left-[57px] top-[248px] w-[59px] h-[59px] bg-white rounded-[3px]" />
      <div className="absolute left-[1px] top-[793px] w-[12px] h-[72px] bg-white rounded-r-[4px] border-r-[3px] border-y-[3px] border-white">
        <div className="w-full h-full bg-[#f0f0f0]" />
      </div>
      <Cursor />
    </div>
  );
}
